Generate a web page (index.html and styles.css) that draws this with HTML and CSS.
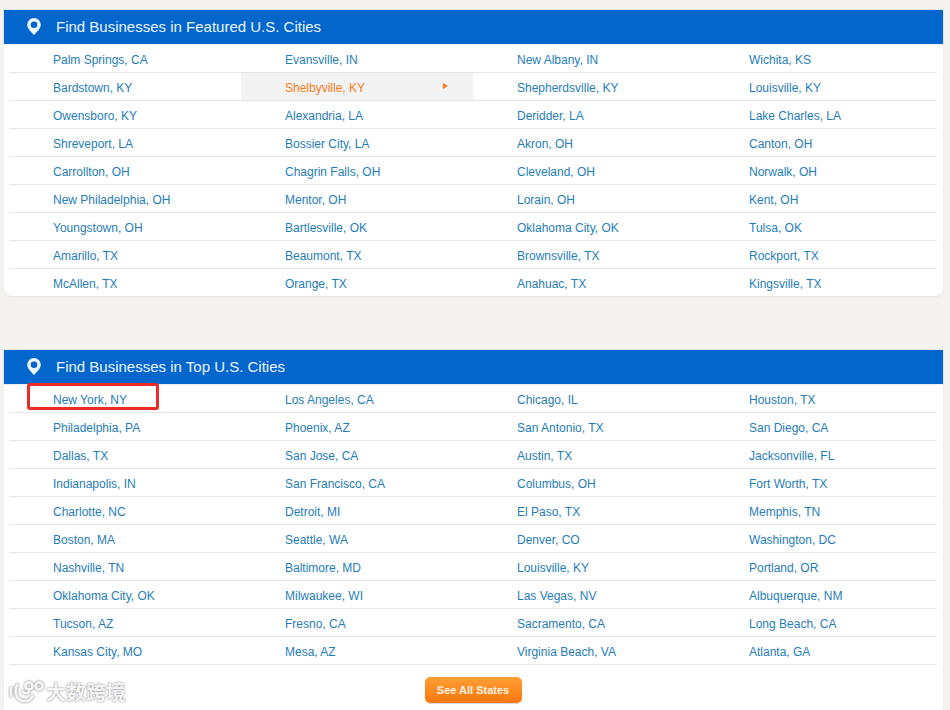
FILE: index.html
```html
<!DOCTYPE html>
<html>
<head>
    <title>Find Businesses</title>
    <link rel="stylesheet" href="styles.css">
</head>
<body>

    <!-- Featured cities -->
    <section class="city-box">
        <h2 class="city-box-title">
            <svg class="pin-icon" viewBox="0 0 14 17"><path fill-rule="evenodd" d="M7 0a6.800 6.800 0 0 0-6.800 6.800C.2 10.500 4.500 14.300 7 17c2.500-2.700 6.800-6.500 6.800-10.200A6.800 6.800 0 0 0 7 0zm0 3.400a3.300 3.300 0 1 1 0 6.600 3.300 3.300 0 0 1 0-6.600z"/></svg>
            Find Businesses in Featured U.S. Cities
        </h2>
        <ul class="city-list">
            <li><a href="#">Palm Springs, CA</a></li>
            <li><a href="#">Evansville, IN</a></li>
            <li><a href="#">New Albany, IN</a></li>
            <li><a href="#">Wichita, KS</a></li>
            <li><a href="#">Bardstown, KY</a></li>
            <li class="city-hover"><a href="#">Shelbyville, KY</a></li>
            <li><a href="#">Shepherdsville, KY</a></li>
            <li><a href="#">Louisville, KY</a></li>
            <li><a href="#">Owensboro, KY</a></li>
            <li><a href="#">Alexandria, LA</a></li>
            <li><a href="#">Deridder, LA</a></li>
            <li><a href="#">Lake Charles, LA</a></li>
            <li><a href="#">Shreveport, LA</a></li>
            <li><a href="#">Bossier City, LA</a></li>
            <li><a href="#">Akron, OH</a></li>
            <li><a href="#">Canton, OH</a></li>
            <li><a href="#">Carrollton, OH</a></li>
            <li><a href="#">Chagrin Falls, OH</a></li>
            <li><a href="#">Cleveland, OH</a></li>
            <li><a href="#">Norwalk, OH</a></li>
            <li><a href="#">New Philadelphia, OH</a></li>
            <li><a href="#">Mentor, OH</a></li>
            <li><a href="#">Lorain, OH</a></li>
            <li><a href="#">Kent, OH</a></li>
            <li><a href="#">Youngstown, OH</a></li>
            <li><a href="#">Bartlesville, OK</a></li>
            <li><a href="#">Oklahoma City, OK</a></li>
            <li><a href="#">Tulsa, OK</a></li>
            <li><a href="#">Amarillo, TX</a></li>
            <li><a href="#">Beaumont, TX</a></li>
            <li><a href="#">Brownsville, TX</a></li>
            <li><a href="#">Rockport, TX</a></li>
            <li class="city-last"><a href="#">McAllen, TX</a></li>
            <li class="city-last"><a href="#">Orange, TX</a></li>
            <li class="city-last"><a href="#">Anahuac, TX</a></li>
            <li class="city-last"><a href="#">Kingsville, TX</a></li>
        </ul>
    </section>

    <!-- Top cities -->
    <section class="city-box city-box-top">
        <h2 class="city-box-title">
            <svg class="pin-icon" viewBox="0 0 14 17"><path fill-rule="evenodd" d="M7 0a6.800 6.800 0 0 0-6.800 6.800C.2 10.500 4.500 14.300 7 17c2.500-2.700 6.800-6.500 6.800-10.200A6.800 6.800 0 0 0 7 0zm0 3.400a3.300 3.300 0 1 1 0 6.600 3.300 3.300 0 0 1 0-6.600z"/></svg>
            Find Businesses in Top U.S. Cities
        </h2>
        <ul class="city-list">
            <li class="city-marked"><a href="#">New York, NY</a></li>
            <li><a href="#">Los Angeles, CA</a></li>
            <li><a href="#">Chicago, IL</a></li>
            <li><a href="#">Houston, TX</a></li>
            <li><a href="#">Philadelphia, PA</a></li>
            <li><a href="#">Phoenix, AZ</a></li>
            <li><a href="#">San Antonio, TX</a></li>
            <li><a href="#">San Diego, CA</a></li>
            <li><a href="#">Dallas, TX</a></li>
            <li><a href="#">San Jose, CA</a></li>
            <li><a href="#">Austin, TX</a></li>
            <li><a href="#">Jacksonville, FL</a></li>
            <li><a href="#">Indianapolis, IN</a></li>
            <li><a href="#">San Francisco, CA</a></li>
            <li><a href="#">Columbus, OH</a></li>
            <li><a href="#">Fort Worth, TX</a></li>
            <li><a href="#">Charlotte, NC</a></li>
            <li><a href="#">Detroit, MI</a></li>
            <li><a href="#">El Paso, TX</a></li>
            <li><a href="#">Memphis, TN</a></li>
            <li><a href="#">Boston, MA</a></li>
            <li><a href="#">Seattle, WA</a></li>
            <li><a href="#">Denver, CO</a></li>
            <li><a href="#">Washington, DC</a></li>
            <li><a href="#">Nashville, TN</a></li>
            <li><a href="#">Baltimore, MD</a></li>
            <li><a href="#">Louisville, KY</a></li>
            <li><a href="#">Portland, OR</a></li>
            <li><a href="#">Oklahoma City, OK</a></li>
            <li><a href="#">Milwaukee, WI</a></li>
            <li><a href="#">Las Vegas, NV</a></li>
            <li><a href="#">Albuquerque, NM</a></li>
            <li><a href="#">Tucson, AZ</a></li>
            <li><a href="#">Fresno, CA</a></li>
            <li><a href="#">Sacramento, CA</a></li>
            <li><a href="#">Long Beach, CA</a></li>
            <li><a href="#">Kansas City, MO</a></li>
            <li><a href="#">Mesa, AZ</a></li>
            <li><a href="#">Virginia Beach, VA</a></li>
            <li><a href="#">Atlanta, GA</a></li>
        </ul>
        <div class="see-all-row">
            <a class="see-all" href="#">See All States</a>
        </div>
    </section>

    <!-- Watermark sits over the page -->
    <div class="watermark">
        <svg class="watermark-logo" viewBox="0 0 36 22"><path d="M3 6v10M10 3C6 8 7 19 15 20c6 .5 9-2 10-6M14 10c2 3 6 3 8 0"/><circle cx="21" cy="5" r="3.500"/><circle cx="31" cy="5" r="3.500"/></svg>
        <span>大数跨境</span>
    </div>

</body>
</html>
```

FILE: styles.css
```css
body {
    font-family: "Liberation Sans", Arial, sans-serif;
    font-size: 12px;
    margin: 0;
    padding: 0;
    height: 710px;
    overflow: hidden;
    background-color: #f4f3f0;
}

/** City boxes **/

.city-box {
    width: 939px;
    margin: 10px 0 0 4px;
    background-color: #fff;
    border-radius: 0 0 8px 8px;
    box-shadow: 0 1px 2px #e6e5e2;
}

.city-box-top {
    margin-top: 54px;
    padding-bottom: 30px;
}

.city-box-title {
    display: flex;
    align-items: center;
    box-sizing: border-box;
    height: 34px;
    margin: 0;
    padding: 0 0 2px 23px;
    font-size: 15px;
    font-weight: normal;
    color: #eaf4ff;
    background-color: #0366cc;
    box-shadow: 0 0 1px #8fa8c4;
}

.pin-icon {
    width: 14px;
    height: 17px;
    margin-right: 15px;
    fill: #eef6ff;
}

/* Four equal columns, each row separated by a thin line */
.city-list {
    display: grid;
    grid-template-columns: repeat(4, 232px);
    margin: 0 0 0 5px;
    padding: 1px 0 0;
    list-style: none;
}

.city-list li {
    position: relative;
    height: 27px;
    padding-left: 44px;
    border-bottom: 1px solid #e6e6e6;
    line-height: 30px;
}

.city-list .city-last {
    border-bottom: 0;
}

.city-list a {
    color: #1f7db8;
    text-decoration: none;
}

.city-list .city-hover {
    background-color: #f3f3f3;
}

.city-list .city-hover a {
    color: #f47c20;
}

/* Small arrow on the hovered row */
.city-hover::after {
    content: "";
    position: absolute;
    top: 10px;
    right: 25px;
    border-left: 5px solid #f47c20;
    border-top: 3px solid transparent;
    border-bottom: 3px solid transparent;
}

/* Red annotation round the first city */
.city-marked::after {
    content: "";
    position: absolute;
    top: -2px;
    left: 18px;
    width: 126px;
    height: 21px;
    border: 3px solid #ec2c26;
    border-radius: 3px;
}

/** See all button **/

.see-all-row {
    display: flex;
    justify-content: center;
    padding-top: 12px;
    padding-right: 1px;
}

.see-all {
    width: 97px;
    height: 26px;
    border-radius: 5px;
    font-size: 11px;
    font-weight: bold;
    line-height: 26px;
    text-align: center;
    text-decoration: none;
    color: #fff3e0;
    background: linear-gradient(#ff9f35, #f9760f);
    box-shadow: 0 1px 1px #d9d6d0;
}

/** Watermark **/

.watermark {
    position: absolute;
    top: 680px;
    left: 8px;
    display: flex;
    align-items: center;
    gap: 2px;
    font-family: "Noto Sans CJK SC", sans-serif;
    font-size: 20px;
    font-weight: bold;
    line-height: 24px;
    color: #f4f4f4;
    text-shadow: 0 0 2px #777;
}

.watermark-logo {
    width: 36px;
    height: 22px;
    fill: none;
    stroke: #f4f4f4;
    stroke-width: 3;
    filter: drop-shadow(0 0 1px #777);
}
```
